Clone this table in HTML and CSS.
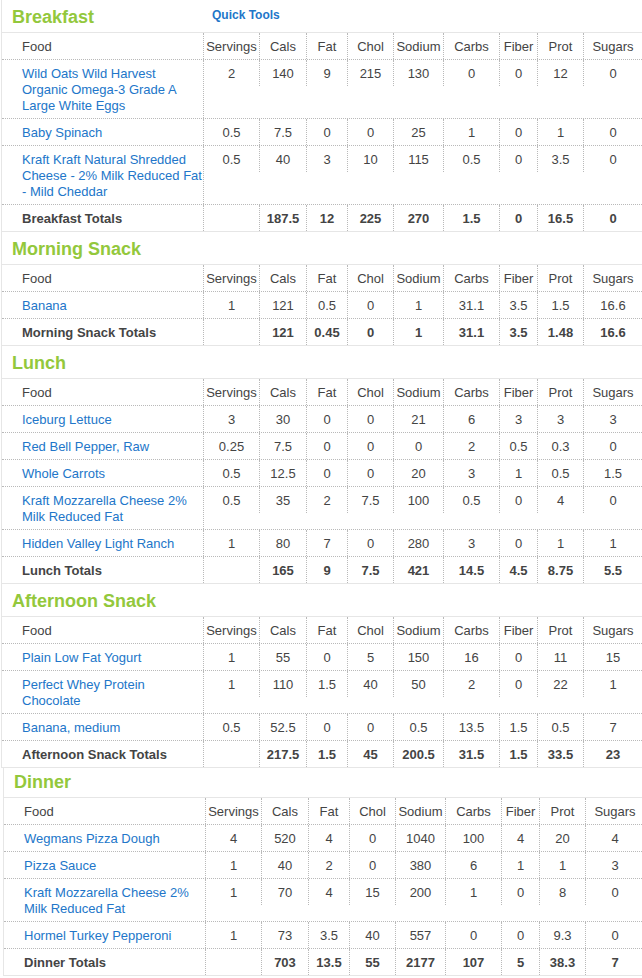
FILE: index.html
```html
<!DOCTYPE html>
<html lang="en">
<head>
<meta charset="utf-8">
<title>Food Diary</title>
<link rel="stylesheet" href="styles.css">
</head>
<body>
<div class="diary">

  <section class="meal">
    <div class="meal-title"><span class="meal-name">Breakfast</span><a class="quick" href="#">Quick Tools</a></div>
    <div class="row head"><div class="c food">Food</div><div class="c serv">Servings</div><div class="c">Cals</div><div class="c">Fat</div><div class="c">Chol</div><div class="c">Sodium</div><div class="c">Carbs</div><div class="c">Fiber</div><div class="c">Prot</div><div class="c">Sugars</div></div>
    <div class="row"><div class="c food"><a href="#">Wild Oats Wild Harvest Organic Omega-3 Grade A Large White Eggs</a></div><div class="c serv">2</div><div class="c">140</div><div class="c">9</div><div class="c">215</div><div class="c">130</div><div class="c">0</div><div class="c">0</div><div class="c">12</div><div class="c">0</div></div>
    <div class="row"><div class="c food"><a href="#">Baby Spinach</a></div><div class="c serv">0.5</div><div class="c">7.5</div><div class="c">0</div><div class="c">0</div><div class="c">25</div><div class="c">1</div><div class="c">0</div><div class="c">1</div><div class="c">0</div></div>
    <div class="row"><div class="c food"><a href="#">Kraft Kraft Natural Shredded Cheese - 2% Milk Reduced Fat - Mild Cheddar</a></div><div class="c serv">0.5</div><div class="c">40</div><div class="c">3</div><div class="c">10</div><div class="c">115</div><div class="c">0.5</div><div class="c">0</div><div class="c">3.5</div><div class="c">0</div></div>
    <div class="row total"><div class="c food">Breakfast Totals</div><div class="c serv"></div><div class="c">187.5</div><div class="c">12</div><div class="c">225</div><div class="c">270</div><div class="c">1.5</div><div class="c">0</div><div class="c">16.5</div><div class="c">0</div></div>
  </section>

  <section class="meal">
    <div class="meal-title"><span class="meal-name">Morning Snack</span></div>
    <div class="row head"><div class="c food">Food</div><div class="c serv">Servings</div><div class="c">Cals</div><div class="c">Fat</div><div class="c">Chol</div><div class="c">Sodium</div><div class="c">Carbs</div><div class="c">Fiber</div><div class="c">Prot</div><div class="c">Sugars</div></div>
    <div class="row"><div class="c food"><a href="#">Banana</a></div><div class="c serv">1</div><div class="c">121</div><div class="c">0.5</div><div class="c">0</div><div class="c">1</div><div class="c">31.1</div><div class="c">3.5</div><div class="c">1.5</div><div class="c">16.6</div></div>
    <div class="row total"><div class="c food">Morning Snack Totals</div><div class="c serv"></div><div class="c">121</div><div class="c">0.45</div><div class="c">0</div><div class="c">1</div><div class="c">31.1</div><div class="c">3.5</div><div class="c">1.48</div><div class="c">16.6</div></div>
  </section>

  <section class="meal">
    <div class="meal-title"><span class="meal-name">Lunch</span></div>
    <div class="row head"><div class="c food">Food</div><div class="c serv">Servings</div><div class="c">Cals</div><div class="c">Fat</div><div class="c">Chol</div><div class="c">Sodium</div><div class="c">Carbs</div><div class="c">Fiber</div><div class="c">Prot</div><div class="c">Sugars</div></div>
    <div class="row"><div class="c food"><a href="#">Iceburg Lettuce</a></div><div class="c serv">3</div><div class="c">30</div><div class="c">0</div><div class="c">0</div><div class="c">21</div><div class="c">6</div><div class="c">3</div><div class="c">3</div><div class="c">3</div></div>
    <div class="row"><div class="c food"><a href="#">Red Bell Pepper, Raw</a></div><div class="c serv">0.25</div><div class="c">7.5</div><div class="c">0</div><div class="c">0</div><div class="c">0</div><div class="c">2</div><div class="c">0.5</div><div class="c">0.3</div><div class="c">0</div></div>
    <div class="row"><div class="c food"><a href="#">Whole Carrots</a></div><div class="c serv">0.5</div><div class="c">12.5</div><div class="c">0</div><div class="c">0</div><div class="c">20</div><div class="c">3</div><div class="c">1</div><div class="c">0.5</div><div class="c">1.5</div></div>
    <div class="row"><div class="c food"><a href="#">Kraft Mozzarella Cheese 2% Milk Reduced Fat</a></div><div class="c serv">0.5</div><div class="c">35</div><div class="c">2</div><div class="c">7.5</div><div class="c">100</div><div class="c">0.5</div><div class="c">0</div><div class="c">4</div><div class="c">0</div></div>
    <div class="row"><div class="c food"><a href="#">Hidden Valley Light Ranch</a></div><div class="c serv">1</div><div class="c">80</div><div class="c">7</div><div class="c">0</div><div class="c">280</div><div class="c">3</div><div class="c">0</div><div class="c">1</div><div class="c">1</div></div>
    <div class="row total"><div class="c food">Lunch Totals</div><div class="c serv"></div><div class="c">165</div><div class="c">9</div><div class="c">7.5</div><div class="c">421</div><div class="c">14.5</div><div class="c">4.5</div><div class="c">8.75</div><div class="c">5.5</div></div>
  </section>

  <section class="meal">
    <div class="meal-title"><span class="meal-name">Afternoon Snack</span></div>
    <div class="row head"><div class="c food">Food</div><div class="c serv">Servings</div><div class="c">Cals</div><div class="c">Fat</div><div class="c">Chol</div><div class="c">Sodium</div><div class="c">Carbs</div><div class="c">Fiber</div><div class="c">Prot</div><div class="c">Sugars</div></div>
    <div class="row"><div class="c food"><a href="#">Plain Low Fat Yogurt</a></div><div class="c serv">1</div><div class="c">55</div><div class="c">0</div><div class="c">5</div><div class="c">150</div><div class="c">16</div><div class="c">0</div><div class="c">11</div><div class="c">15</div></div>
    <div class="row"><div class="c food"><a href="#">Perfect Whey Protein Chocolate</a></div><div class="c serv">1</div><div class="c">110</div><div class="c">1.5</div><div class="c">40</div><div class="c">50</div><div class="c">2</div><div class="c">0</div><div class="c">22</div><div class="c">1</div></div>
    <div class="row"><div class="c food"><a href="#">Banana, medium</a></div><div class="c serv">0.5</div><div class="c">52.5</div><div class="c">0</div><div class="c">0</div><div class="c">0.5</div><div class="c">13.5</div><div class="c">1.5</div><div class="c">0.5</div><div class="c">7</div></div>
    <div class="row total"><div class="c food">Afternoon Snack Totals</div><div class="c serv"></div><div class="c">217.5</div><div class="c">1.5</div><div class="c">45</div><div class="c">200.5</div><div class="c">31.5</div><div class="c">1.5</div><div class="c">33.5</div><div class="c">23</div></div>
  </section>

  <section class="meal meal-shifted">
    <div class="meal-title"><span class="meal-name">Dinner</span></div>
    <div class="row head"><div class="c food">Food</div><div class="c serv">Servings</div><div class="c">Cals</div><div class="c">Fat</div><div class="c">Chol</div><div class="c">Sodium</div><div class="c">Carbs</div><div class="c">Fiber</div><div class="c">Prot</div><div class="c">Sugars</div></div>
    <div class="row"><div class="c food"><a href="#">Wegmans Pizza Dough</a></div><div class="c serv">4</div><div class="c">520</div><div class="c">4</div><div class="c">0</div><div class="c">1040</div><div class="c">100</div><div class="c">4</div><div class="c">20</div><div class="c">4</div></div>
    <div class="row"><div class="c food"><a href="#">Pizza Sauce</a></div><div class="c serv">1</div><div class="c">40</div><div class="c">2</div><div class="c">0</div><div class="c">380</div><div class="c">6</div><div class="c">1</div><div class="c">1</div><div class="c">3</div></div>
    <div class="row"><div class="c food"><a href="#">Kraft Mozzarella Cheese 2% Milk Reduced Fat</a></div><div class="c serv">1</div><div class="c">70</div><div class="c">4</div><div class="c">15</div><div class="c">200</div><div class="c">1</div><div class="c">0</div><div class="c">8</div><div class="c">0</div></div>
    <div class="row"><div class="c food"><a href="#">Hormel Turkey Pepperoni</a></div><div class="c serv">1</div><div class="c">73</div><div class="c">3.5</div><div class="c">40</div><div class="c">557</div><div class="c">0</div><div class="c">0</div><div class="c">9.3</div><div class="c">0</div></div>
    <div class="row total"><div class="c food">Dinner Totals</div><div class="c serv"></div><div class="c">703</div><div class="c">13.5</div><div class="c">55</div><div class="c">2177</div><div class="c">107</div><div class="c">5</div><div class="c">38.3</div><div class="c">7</div></div>
  </section>

</div>
</body>
</html>
```

FILE: styles.css
```css
html, body {
  margin: 0;
  padding: 0;
  overflow: hidden;
  background: #fff;
}

body {
  font-family: "Liberation Sans", Arial, sans-serif;
  font-size: 13px;
  color: #444;
}

a {
  color: #2276c9;
  text-decoration: none;
}

.diary {
  width: 642px;
}

.meal {
  margin-left: 1px;
  width: 641px;
  border-left: 1px solid #e6e6e6;
  box-sizing: border-box;
}

.meal-shifted {
  margin-left: 3px;
  width: 643px;
}

.meal-title {
  display: flex;
  align-items: flex-start;
  height: 32px;
  border-bottom: 1px solid #e6e6e6;
}

.meal-name {
  width: 200px;
  padding-left: 10px;
  padding-top: 2px;
  font-size: 18px;
  font-weight: bold;
  line-height: 30px;
  color: #93c83c;
}

.meal-shifted .meal-title {
  height: 29px;
}

.meal-shifted .meal-name {
  padding-top: 0;
  line-height: 28px;
}

.quick {
  padding-top: 7px;
  font-size: 12px;
  font-weight: bold;
  line-height: 16px;
  color: #2276c9;
}

.row {
  display: grid;
  grid-template-columns: 202px 55px 47px 41px 46px 50px 56px 38px 46px 59px;
  align-items: start;
  border-bottom: 1px dotted #b9b9b9;
}

.c {
  box-sizing: border-box;
  padding: 6px 0 4px;
  line-height: 16px;
  height: 26px;
  text-align: center;
  white-space: nowrap;
  border-left: 1px dotted #b9b9b9;
}

.c.food {
  height: auto;
  align-self: stretch;
  text-align: left;
  white-space: normal;
  padding-left: 20px;
  padding-right: 0;
  border-left: 0;
  border-right: 1px dotted #b9b9b9;
}

.c.serv {
  border-left: 0;
}

.total {
  font-weight: bold;
  border-bottom: 1px solid #e6e6e6;
}
```
